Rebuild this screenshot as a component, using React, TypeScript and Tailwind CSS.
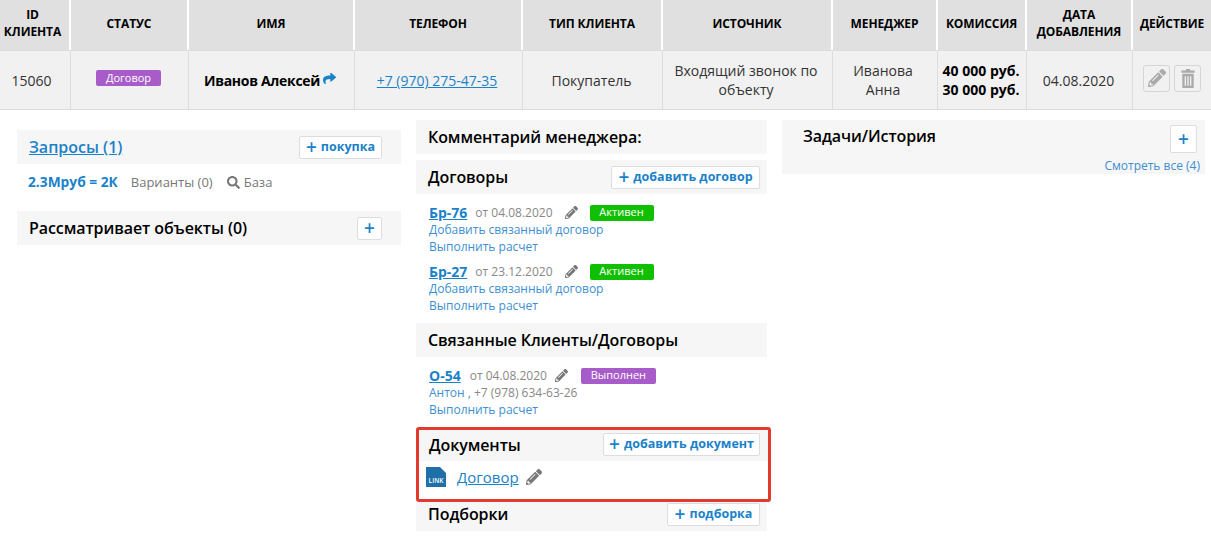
import { FaPencilAlt, FaSearch, FaShare } from "react-icons/fa";

const columns = [
  "ID КЛИЕНТА",
  "СТАТУС",
  "ИМЯ",
  "ТЕЛЕФОН",
  "ТИП КЛИЕНТА",
  "ИСТОЧНИК",
  "МЕНЕДЖЕР",
  "КОМИССИЯ",
  "ДАТА ДОБАВЛЕНИЯ",
  "ДЕЙСТВИЕ",
];

const gridCols =
  "grid grid-cols-[71px_118px_166px_168px_140px_170px_105px_89px_106px_78px]";

function AddButton({ label, className = "" }: { label?: string; className?: string }) {
  return (
    <button
      className={`flex h-[23px] items-center justify-center gap-[4px] rounded-[2px] border border-[#dddddd] bg-white text-[12.5px] font-bold text-[#1a82c9] ${className}`}
    >
      <span className="text-[19px] leading-none font-semibold">+</span>
      {label && <span>{label}</span>}
    </button>
  );
}

function SectionHead({ title, children }: { title: string; children?: React.ReactNode }) {
  return (
    <div className="flex h-[34px] items-center justify-between bg-[#f6f6f6] pr-[7px] pl-[12px]">
      <h3 className="text-[16px] font-semibold tracking-[-0.08px] text-black">{title}</h3>
      {children}
    </div>
  );
}

function Pencil({ size = 13 }: { size?: number }) {
  return <FaPencilAlt size={size} className="text-[#777777]" />;
}

type ContractProps = {
  code: string;
  date: string;
  badge: string;
  badgeClass: string;
  dateClass: string;
  pencilClass: string;
  sub: React.ReactNode;
};

function Contract({ code, date, badge, badgeClass, dateClass, pencilClass, sub }: ContractProps) {
  return (
    <div className="flex flex-col">
      <div className="flex h-[19px] items-center">
        <a className="text-[14px] font-bold text-[#1a82c9] underline">{code}</a>
        <span className={`text-[12px] text-[#888888] ${dateClass}`}>{date}</span>
        <span className={pencilClass}><Pencil /></span>
        <span className={`ml-3 flex h-[16px] items-center justify-center rounded-[2px] text-[11px] text-white ${badgeClass}`}>
          {badge}
        </span>
      </div>
      <div className="h-[17px] text-[12px] leading-[16px] text-[#3d8fd1]">{sub}</div>
      <a className="h-[19px] text-[12px] leading-[16px] text-[#3d8fd1]">Выполнить расчет</a>
    </div>
  );
}

export default function App() {
  return (
    <div className="h-[538px] w-[1211px] overflow-hidden bg-white font-['Open_Sans',sans-serif] text-[#333333]">
      {/* Таблица клиента */}
      <div className={`${gridCols} h-[50px] bg-white`}>
        {columns.map((c) => (
          <div
            key={c}
            className="flex items-center justify-center border-r-2 border-white bg-[#e0e0e0] pb-[4px] text-center text-[12px] leading-[17px] font-bold tracking-[-0.1px] text-black first:pr-[4px] last:border-r-0"
          >
            {c}
          </div>
        ))}
      </div>
      <div className={`${gridCols} h-[60px] border-y border-[#dddddd] bg-[#f1f1f1] text-center text-[14px] leading-[19px]`}>
        <div className="flex items-center justify-center border-r border-[#dddddd] pr-[7px]">15060</div>
        <div className="flex items-center justify-center border-r border-[#dddddd]">
          <span className="mr-[2px] mb-[4px] rounded-[2px] bg-[#a85cc9] px-[10px] py-0 text-[11px] leading-[16px] text-white">Договор</span>
        </div>
        <div className="flex items-center justify-center gap-[3px] border-r border-[#dddddd] pr-[3px] font-bold tracking-[-0.3px] text-black">
          <span className="text-[14px]">Иванов Алексей</span>
          <FaShare size={13} className="mb-[3px] text-[#1a82c9]" />
        </div>
        <div className="flex items-center justify-center border-r border-[#dddddd] pr-[3px]">
          <a className="text-[#1a82c9] underline">+7 (970) 275-47-35</a>
        </div>
        <div className="flex items-center justify-center border-r border-[#dddddd] pr-[2px]">Покупатель</div>
        <div className="flex items-center justify-center border-r border-[#dddddd] pr-[14px] pl-[11px]">Входящий звонок по объекту</div>
        <div className="flex items-center justify-center border-r border-[#dddddd] pr-[27px] pl-[23px]">Иванова Анна</div>
        <div className="flex items-center justify-center border-r border-[#dddddd] pr-[2px] font-bold text-black">40 000 руб.<br />30 000 руб.</div>
        <div className="flex items-center justify-center border-r border-[#dddddd] pr-[2px]">04.08.2020</div>
        <div className="flex items-center justify-center gap-1 pb-[4px]">
          <button className="flex h-[27px] w-[27px] items-center justify-center rounded-[3px] border border-[#d5d5d5] bg-[#f1f1f1]">
            <FaPencilAlt size={18} className="text-[#aaaaaa]" />
          </button>
          <button className="flex h-[27px] w-[27px] items-center justify-center rounded-[3px] border border-[#d5d5d5] bg-[#f1f1f1]">
            <svg width="14" height="19" viewBox="0 0 14 20" className="fill-[#aaaaaa]">
              <path d="M5 0h4l.5 1.5H14V4H0V1.5h4.5zM1 5h12v15H1zm2.5 2.5v10h1.4v-10zm2.8 0v10h1.4v-10zm2.8 0v10h1.4v-10z" fillRule="evenodd" />
            </svg>
          </button>
        </div>
      </div>

      {/* Три колонки */}
      <div className="flex items-start">
        {/* Левая */}
        <div className="mt-5 ml-[17px] flex w-[384px] flex-col">
          <div className="flex h-[34px] items-center justify-between bg-[#f6f6f6] pr-[19px] pl-[12px]">
            <a className="text-[16px] font-semibold text-[#1a82c9] underline">Запросы (1)</a>
            <AddButton label="покупка" className="w-[83px]" />
          </div>
          <div className="mt-[9px] flex h-[19px] items-center pl-[11px] text-[13px] text-[#777777]">
            <span className="text-[13.75px] font-bold text-[#1a82c9]">2.3Мруб = 2К</span>
            <span className="ml-[13px]">Варианты (0)</span>
            <FaSearch size={13} className="ml-[14px] text-[#777777]" />
            <span className="ml-[4px]">База</span>
          </div>
          <div className="mt-[19px] flex h-[34px] items-center justify-between bg-[#f6f6f6] pr-[19px] pl-[12px]">
            <h3 className="text-[16px] font-semibold tracking-[-0.08px] text-black">Рассматривает объекты (0)</h3>
            <AddButton className="w-[25px]" />
          </div>
        </div>

        {/* Средняя */}
        <div className="mt-[10px] ml-[15px] flex w-[351px] flex-col">
          <SectionHead title="Комментарий менеджера:" />
          <div className="mt-[6px]">
            <SectionHead title="Договоры">
              <AddButton label="добавить договор" className="w-[149px]" />
            </SectionHead>
          </div>
          <div className="mt-[9px] flex flex-col gap-[4px] pl-[13px]">
            <Contract code="Бр-76" date="от 04.08.2020" badge="Активен" badgeClass="w-[64px] bg-[#10c000]" dateClass="ml-[8px]" pencilClass="ml-[12px]" sub="Добавить связанный договор" />
            <Contract code="Бр-27" date="от 23.12.2020" badge="Активен" badgeClass="w-[64px] bg-[#10c000]" dateClass="ml-[8px]" pencilClass="ml-[12px]" sub="Добавить связанный договор" />
          </div>
          <div className="mt-[6px]">
            <SectionHead title="Связанные Клиенты/Договоры" />
          </div>
          <div className="mt-[9px] pl-[13px]">
            <Contract
              code="О-54"
              date="от 04.08.2020"
              badge="Выполнен"
              badgeClass="w-[75px] bg-[#a85cc9]"
              dateClass="ml-[9px]"
              pencilClass="mr-[1px] ml-[8px]"
              sub={<>Антон , <span className="text-[#888888]">+7 (978) 634-63-26</span></>}
            />
          </div>
          <div className="mt-[6px] -mr-[4px] h-[75px] rounded-[3px] border-[3px] border-[#e23a2e]">
            <div className="flex h-[31px] items-center justify-between bg-[#f6f6f6] pr-[8px] pb-[2px] pl-[10px]">
              <h3 className="text-[16px] font-semibold tracking-[-0.08px] text-black">Документы</h3>
              <AddButton label="добавить документ" className="w-[157px]" />
            </div>
            <div className="flex h-[32px] items-center pl-[7px]">
              <svg width="20" height="20" viewBox="0 0 20 20">
                <path d="M0 0h14l6 6v14H0z" fill="#1f6fa8" />
                <text x="10" y="16" textAnchor="middle" fontSize="6.5" fontWeight="600" fill="#ffffff" fontFamily="Open Sans">LINK</text>
              </svg>
              <a className="ml-[11px] text-[15px] text-[#1a82c9] underline">Договор</a>
              <span className="mb-[1px] ml-[7px]"><Pencil size={16} /></span>
            </div>
          </div>
          <div className="flex h-[29px] items-center justify-between bg-[#f6f6f6] pr-[7px] pb-[5px] pl-[12px]">
            <h3 className="text-[16px] font-semibold tracking-[-0.08px] text-black">Подборки</h3>
            <AddButton label="подборка" className="w-[93px]" />
          </div>
        </div>

        {/* Правая */}
        <div className="mt-[10px] ml-[15px] h-[54px] w-[423px] bg-[#f6f6f6] pt-[5px] pr-[5px] pl-[21px]">
          <div className="flex items-start justify-between">
            <h3 className="-mt-[1px] text-[16px] font-semibold tracking-[-0.08px] text-black">Задачи/История</h3>
            <AddButton className="mr-[3px] h-[28px] w-[27px]" />
          </div>
          <div className="mt-[5px] text-right text-[12px] leading-[16px] text-[#3d8fd1]">Смотреть все (4)</div>
        </div>
      </div>
    </div>
  );
}
